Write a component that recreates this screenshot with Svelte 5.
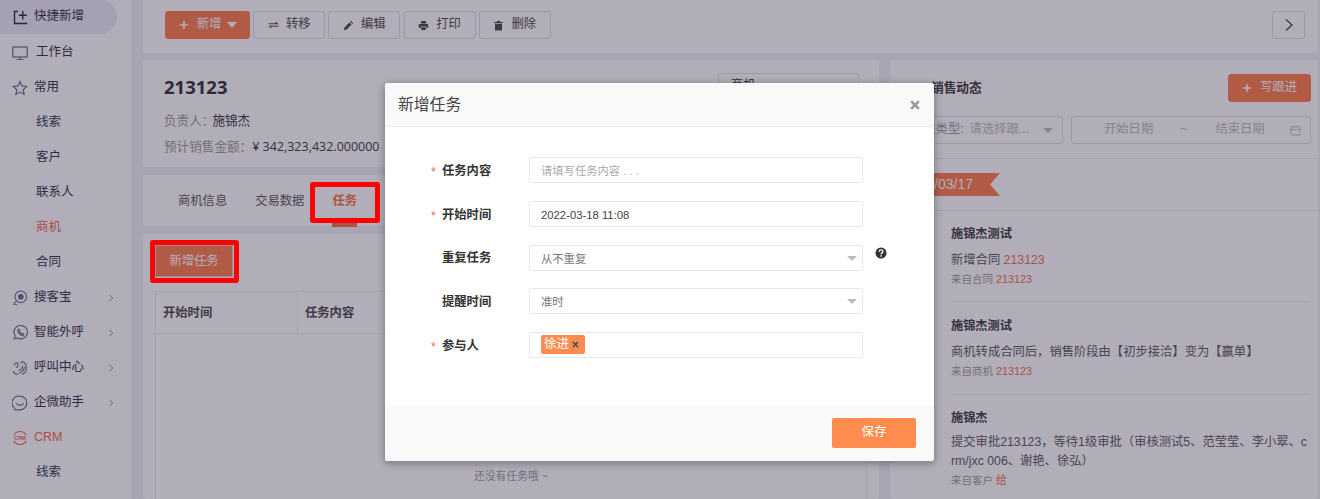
<script>
  const sub = ['线索', '客户', '联系人', '商机', '合同'];
  const tools = [
    { label: '转移', icon: 'swap' },
    { label: '编辑', icon: 'pen' },
    { label: '打印', icon: 'print' },
    { label: '删除', icon: 'trash' }
  ];
  const groups = [
    { label: '搜客宝', icon: 'search' },
    { label: '智能外呼', icon: 'phone' },
    { label: '呼叫中心', icon: 'call' },
    { label: '企微助手', icon: 'wechat' }
  ];
  const feed = [
    { name: '施锦杰测试', text: '新增合同 ', link: '213123', from: '来自合同 ', ref: '213123' },
    { name: '施锦杰测试', text: '商机转成合同后，销售阶段由【初步接洽】变为【赢单】', link: '', from: '来自商机 ', ref: '213123' },
    { name: '施锦杰', text: '提交审批213123，等待1级审批（审核测试5、范莹莹、李小翠、crm/jxc 006、谢艳、徐弘）', link: '', from: '来自客户 ', ref: '给' }
  ];
</script>

{#snippet chevron()}
  <svg class="chev" viewBox="0 0 6 8" width="6" height="8"><path d="M1.500 .8L4.700 4 1.500 7.200" fill="none" stroke="#8f8f9c" stroke-width="1"/></svg>
{/snippet}

{#snippet navIcon(name)}
  <svg class="nav-ico" viewBox="0 0 16 16" width="16" height="16" fill="none" stroke="#666a8a" stroke-width="1.200">
    {#if name === 'search'}
      <circle cx="8.800" cy="6.800" r="5.800"/><circle cx="8.800" cy="6.800" r="2.800" fill="#5c6080" stroke="none"/><path d="M3.800 11.500L1.200 15M3 14.500l2 .3"/>
    {:else if name === 'phone'}
      <path d="M2.200 13.800l.9-3.100A6.700 6.700 0 1 1 5.600 13z"/><path d="M5.800 5c.1 2.800 2.400 5.300 5.300 5.600l.6-1.500-1.900-1-1 .7-1.700-1.800.7-1-1-1.900z"/>
    {:else if name === 'call'}
      <path d="M2 5.500C2.500 3 5 2 6 3.500S5 7 4.500 8M6.500 14c-3 .5-5-1-5-3M10 14.500c3.500-1.500 5-5 4-9S10 1 8.500 3M6.500 10.500C9 10.500 11 8 10.500 5.500M7 13c3-.5 5-3 5.500-6"/>
    {:else if name === 'wechat'}
      <path d="M8 1.200a6.800 6.800 0 0 1 0 13.600H3.200L1.800 12.500A6.800 6.800 0 0 1 8 1.200z"/><path d="M4.300 8.300c1.500 2.800 5.900 2.800 7.400 0"/>
    {/if}
  </svg>
{/snippet}

<div class="app">
  <aside class="side">
    <div class="nav-row active">
      <svg class="nav-ico" viewBox="0 0 16 16" width="16" height="16" fill="none" stroke="#22223f" stroke-width="1.400"><path d="M6 2.500H2.500v12h12v-1M10.800 2v8.500M6.800 6.300h8"/></svg>
      <span>快捷新增</span>
    </div>
    <div class="nav-row wide">
      <svg class="nav-ico" viewBox="0 0 16 16" width="16" height="16" fill="none" stroke="#666a8a" stroke-width="1.200"><rect x=".8" y="2" width="14.400" height="10"/><path d="M8 12v2.500M4.500 14.500h7"/></svg>
      <span>工作台</span>
    </div>
    <div class="nav-row">
      <svg class="nav-ico" viewBox="0 0 16 16" width="16" height="16" fill="none" stroke="#666a8a" stroke-width="1.200"><path d="M8 1.500l2 4.400 4.700.6-3.500 3.200.9 4.700L8 12.100l-4.100 2.300.9-4.700L1.300 6.500 6 5.900z"/></svg>
      <span>常用</span>
    </div>
    {#each sub as s}
      <div class="nav-row child" class:current={s === '商机'}>{s}</div>
    {/each}
    {#each groups as g}
      <div class="nav-row">
        {@render navIcon(g.icon)}
        <span>{g.label}</span>
        {@render chevron()}
      </div>
    {/each}
    <div class="nav-row current">
      <svg class="nav-ico" viewBox="0 0 16 16" width="16" height="16" fill="none" stroke="#f0673f" stroke-width="1.100"><path d="M1.800 5.300a7 7 0 0 1 12.400 0M1.800 10.700a7 7 0 0 0 12.400 0"/><text x="8" y="10" text-anchor="middle" class="crm-mark">CRM</text></svg>
      <span>CRM</span>
    </div>
    <div class="nav-row child">线索</div>
  </aside>

  <main class="main">
    <section class="toolbar">
      <button class="btn primary">
        <svg viewBox="0 0 10 10" width="10" height="10"><path d="M5 1v8M1 5h8" stroke="#fff" stroke-width="1.600"/></svg>
        <span class="pad">新增</span>
        <i class="caret white"></i>
      </button>
      {#each tools as t}
        <button class="btn tool">
          <svg viewBox="0 0 11 11" width="11" height="11" fill="#404040">
            {#if t.icon === 'swap'}
              <path d="M.5 3.200H7.800V1.500L10.500 4.200H.5zM10.500 6.800H3.200V8.500L.5 5.800h10z"/>
            {:else if t.icon === 'pen'}
              <path d="M.8 10.200l.7-2.800 5-5 2.100 2.100-5 5zM7.200 1.700l.9-.9 2.100 2.100-.9.9z"/>
            {:else if t.icon === 'print'}
              <path d="M3 1h5v2.500H3zM.8 4h9.400v4H8.500V6.500h-6V8H.8zM3.200 7.200h4.600V10H3.200z"/>
            {:else}
              <path d="M4 .8h3V2h3v1H1V2h3zM2 3.800h7V10.500H2z"/>
            {/if}
          </svg>
          <span>{t.label}</span>
        </button>
      {/each}
      <button class="btn next">
        <svg viewBox="0 0 10 14" width="10" height="14"><path d="M2 1.500L8 7l-6 5.500" fill="none" stroke="#404040" stroke-width="1.300"/></svg>
      </button>
    </section>

    <div class="columns">
      <div class="left">
        <section class="summary">
          <h1>213123</h1>
          <p class="line owner"><span class="dim">负责人：</span>施锦杰</p>
          <p class="line"><span class="dim">预计销售金额：</span><span class="amount">¥ 342,323,432.000000</span></p>
          <div class="stage">商机</div>
        </section>
        <nav class="tabs">
          <span class="tab">商机信息</span>
          <span class="tab">交易数据</span>
          <span class="tab on">任务</span>
        </nav>
        <section class="tasks">
          <button class="btn primary big">新增任务</button>
          <div class="table">
            <div class="thead">
              <div class="th first">开始时间</div>
              <div class="th">任务内容</div>
            </div>
            <div class="empty">还没有任务哦 ~</div>
          </div>
        </section>
      </div>

      <section class="right">
        <div class="r-head">
          <h2>销售动态</h2>
          <button class="btn primary follow">
            <svg viewBox="0 0 10 10" width="10" height="10"><path d="M5 1v8M1 5h8" stroke="#fff" stroke-width="1.600"/></svg>
            <span class="pad">写跟进</span>
          </button>
        </div>
        <div class="filters">
          <div class="select-f"><span class="dim">跟进类型:</span><span class="ph">请选择跟...</span><i class="caret grey"></i></div>
          <div class="dates">
            <span class="ph">开始日期</span><span class="ph tilde">~</span><span class="ph">结束日期</span>
            <svg viewBox="0 0 12 12" width="11" height="11" fill="none" stroke="#bbb" stroke-width="1"><rect x="1" y="2" width="10" height="9" rx="1"/><path d="M1 5h10M4 .5v2M8 .5v2"/></svg>
          </div>
        </div>
        <div class="date-row"><span class="ribbon">2022/03/17</span></div>
        <ul class="feed">
          {#each feed as f}
            <li>
              <div class="who">{f.name}</div>
              <div class="what">{f.text}{#if f.link}<span class="lnk">{f.link}</span>{/if}</div>
              <div class="whence">{f.from}<span class="lnk">{f.ref}</span></div>
            </li>
          {/each}
        </ul>
      </section>
    </div>
  </main>

  <div class="scrim"></div>

  <div class="modal">
    <header class="m-head">
      <span>新增任务</span>
      <svg viewBox="0 0 10 10" width="10" height="10"><path d="M1.200 1.200l7.600 7.600M8.800 1.200l-7.600 7.600" stroke="#999" stroke-width="2.600"/></svg>
    </header>
    <div class="m-body">
      <div class="field">
        <label class="req">任务内容</label>
        <div class="input ph2">请填写任务内容 . . .</div>
      </div>
      <div class="field">
        <label class="req">开始时间</label>
        <div class="input val">2022-03-18 11:08</div>
      </div>
      <div class="field">
        <label>重复任务</label>
        <div class="input sel">从不重复<i class="caret grey"></i></div>
        <svg class="help" viewBox="0 0 12 12" width="12" height="12"><circle cx="6" cy="6" r="5.500" fill="#333"/><path d="M4.200 4.700c0-2.300 3.700-2.300 3.700-.1 0 1.300-1.900 1.300-1.900 2.700" fill="none" stroke="#fff" stroke-width="1.300"/><rect x="5.300" y="8.200" width="1.400" height="1.400" fill="#fff"/></svg>
      </div>
      <div class="field">
        <label>提醒时间</label>
        <div class="input sel">准时<i class="caret grey"></i></div>
      </div>
      <div class="field">
        <label class="req">参与人</label>
        <div class="input tags">
          <span class="tag">徐进<svg viewBox="0 0 8 8" width="7" height="7"><path d="M1 1l6 6M7 1L1 7" stroke="#555" stroke-width="2"/></svg></span>
        </div>
      </div>
    </div>
    <footer class="m-foot"><button class="save">保存</button></footer>
  </div>

  <div class="mark mark-tab"></div>
  <div class="mark mark-btn"></div>
</div>

<style>
  :global(body) { margin: 0; }
  * { box-sizing: border-box; }
  .app {
    position: relative; display: flex; height: 499px; overflow: hidden;
    background: #f0f2f5; color: #333; font: 12.300px/1.4 "Liberation Sans", "Noto Sans CJK SC", sans-serif;
  }
  .side { width: 131px; flex: none; background: #fff; }
  .nav-row {
    display: flex; align-items: center; height: 35px; padding-left: 12px; gap: 6px;
    font-size: 12.500px; color: #2b2b3a; width: 117px;
  }
  .nav-row.wide { gap: 8px; }
  .nav-row.active { height: 34px; margin-bottom: 1px; background: #eceaf6; border-radius: 0 17px 17px 0; }
  .nav-row.child { padding-left: 36px; }
  .nav-row.current { color: #f0673f; }
  .nav-row span { white-space: nowrap; }
  .nav-ico { flex: none; }
  .crm-mark { font: bold 5px "Liberation Sans", sans-serif; fill: #f0673f; stroke: none; }
  .chev { margin-left: auto; margin-right: 3px; flex: none; }

  .main { flex: 1; min-width: 0; padding: 0 2px 0 12px; display: flex; flex-direction: column; gap: 7px; }
  .toolbar {
    flex: none; height: 53px; background: #fff; border-radius: 0 0 3px 3px;
    display: flex; align-items: flex-start; padding: 11px 13px 0 22px; gap: 3.200px;
  }
  .btn {
    height: 28px; padding: 0 14px; display: inline-flex; align-items: center; justify-content: center; gap: 7px;
    background: #fff; border: 1px solid #dcdfe6; border-radius: 3px; color: #444; font: inherit;
  }
  .btn.tool { width: 72px; padding: 0; }
  .btn.primary { background: #ff7a45; border-color: #ff7a45; color: #fff; }
  .btn.primary .pad { margin-left: 2px; }
  .toolbar .primary { width: 85px; padding: 0 0 0 1px; gap: 6px; }
  .next { margin-left: auto; width: 33px; padding: 0; }
  .caret { display: inline-block; width: 0; height: 0; border: 5px solid transparent; border-bottom-width: 0; }
  .caret.white { border-top: 6px solid #fff; border-left-width: 5px; }
  .caret.grey { border-top: 5px solid #bbb; }

  .columns { flex: 1; min-height: 0; display: flex; gap: 11px; }
  .left { width: 736px; flex: none; display: flex; flex-direction: column; gap: 8px; }
  .summary { position: relative; height: 107px; flex: none; background: #fff; border-radius: 3px; padding: 14px 21px; }
  .summary h1 { margin: 0 0 9px; font: bold 18.500px/26px "Open Sans", sans-serif; color: #2a2a2a; }
  .line { margin: 0; font-size: 12.600px; line-height: 25px; white-space: nowrap; }
  .owner .dim { margin-right: -2px; }
  .amount { font-family: "Open Sans", "Noto Sans CJK SC", sans-serif; font-size: 12.500px; }
  .dim { color: #999; }
  .stage { position: absolute; left: 575px; top: 13px; width: 141px; height: 28px; border: 1px solid #dcdfe6; border-radius: 3px; padding: 3px 12px; }
  .tabs { height: 51px; flex: none; background: #fff; border-radius: 3px; display: flex; padding: 2px 0 0 35px; gap: 28px; align-items: center; color: #555; position: relative; }
  .tab.on { color: #ff6a35; font-weight: 700; position: relative; align-self: stretch; display: flex; align-items: center; }
  .tab.on::after { content: ""; position: absolute; left: 0; right: 0; bottom: -1px; height: 4px; background: #ff6a35; }
  .tasks { flex: 1; min-height: 0; background: #fff; border-radius: 3px; padding: 11px 12px 0; }
  .btn.big { width: 78px; height: 32px; padding: 2px 0 0; border-radius: 0; border-color: #ccc; }
  .table { margin-top: 14px; border: 1px solid #eee; border-bottom: 0; height: 300px; }
  .thead { display: flex; height: 42px; border-bottom: 1px solid #eee; font-weight: 700; color: #444; }
  .th { padding-left: 7px; line-height: 42px; flex: 1; }
  .th.first { flex: none; width: 142px; border-right: 1px solid #eee; }
  .empty { padding-top: 135px; text-align: center; font-size: 10.800px; color: #999; }

  .right { flex: 1; min-width: 0; background: #fff; border-radius: 3px; display: flex; flex-direction: column; }
  .r-head { display: flex; justify-content: space-between; align-items: flex-start; padding: 14px 7px 0 41px; height: 56px; flex: none; }
  .r-head h2 { margin: 4px 0 0; font-size: 12.700px; font-weight: 700; color: #333; line-height: 20px; }
  .btn.follow { width: 83px; padding: 0; gap: 6px; }
  .filters { display: flex; gap: 8px; padding: 0 7px 0 15px; height: 43px; border-bottom: 1px solid #eee; flex: none; }
  .select-f, .dates { height: 28px; border: 1px solid #dcdfe6; border-radius: 3px; display: flex; align-items: center; }
  .select-f { width: 158px; flex: none; padding: 0 9px 0 5px; white-space: nowrap; gap: 6px; }
  .select-f .caret { margin-left: auto; }
  .ph { color: #bbb; }
  .dates { flex: 1; padding: 0 9px 0 32px; }
  .dates .tilde { margin: 0 28px 0 27px; }
  .dates svg { margin-left: auto; }
  .date-row { height: 52px; border-bottom: 1px solid #eee; padding-top: 14px; flex: none; }
  .ribbon {
    display: inline-block; width: 110px; height: 23px; line-height: 23px; padding-left: 13px; background: #ff7a45; color: #fff; font-size: 14px;
    clip-path: polygon(0 0, 100% 0, 91% 50%, 100% 100%, 0 100%);
  }
  .feed { list-style: none; margin: 0; padding: 0 10px 0 61px; }
  .feed li { padding: 14px 0 0; border-bottom: 1px solid #eee; height: 93px; }
  .feed li:first-child { height: 91px; padding-top: 13px; }
  .feed li:last-child { height: auto; border: 0; padding-top: 13px; }
  .who { font-weight: 700; font-size: 12.200px; line-height: 20px; color: #333; }
  .what { margin-top: 7px; line-height: 18.500px; color: #555; word-break: break-all; }
  .whence { margin-top: 1px; font-size: 10.500px; line-height: 16px; color: #999; }
  .feed li:last-child .what { margin-top: 5px; }
  .feed li:last-child .whence { margin-top: 2px; }
  .lnk { color: #f26b43; }
  .whence .lnk { font-size: 10.800px; }

  .scrim { position: absolute; inset: 0; background: rgba(55, 45, 75, 0.39); }

  .modal {
    position: absolute; left: 385px; top: 83px; width: 549px; height: 378px; background: #fff;
    border-radius: 3px; box-shadow: 0 2px 8px rgba(0, 0, 0, .35); display: flex; flex-direction: column; overflow: hidden;
  }
  .m-head {
    height: 44px; flex: none; display: flex; align-items: center; justify-content: space-between; padding: 1px 14px 0 13px;
    background: #f9f9f9; border-bottom: 1px solid #eee; font-size: 15.800px; color: #444;
  }
  .m-body { flex: 1; padding-top: 30.100px; display: flex; flex-direction: column; gap: 17.750px; }
  .field { display: flex; align-items: center; height: 26px; position: relative; }
  .field label { width: 144px; padding: 3px 0 0 57px; font-weight: 700; color: #333; position: relative; flex: none; }
  .req::before { content: "*"; position: absolute; left: 46px; top: 4px; color: #f26b43; font-weight: 400; }
  .input {
    width: 334px; height: 26px; border: 1px solid #e6e8ee; border-radius: 2px; padding: 1px 11px 0; line-height: 24px; font-size: 11.300px; color: #555; position: relative;
  }
  .val { color: #444; }
  .ph2 { color: #aaa; }
  .sel { color: #777; }
  .sel .caret { position: absolute; right: 5px; top: 10px; }
  .help { margin-left: 12px; margin-top: -10px; }
  .tag {
    position: absolute; left: 11px; top: 2px; width: 44px; height: 19px; background: #ff8c4f; border-radius: 2px; color: #fff;
    display: flex; align-items: center; gap: 3px; padding-left: 3px; font-size: 12.500px; line-height: 19px;
  }
  .m-foot { height: 56px; flex: none; background: #f9f9f9; display: flex; justify-content: flex-end; padding: 13px 18px 0 0; }
  .save { width: 84px; height: 30px; background: #ff8c4f; border: 0; border-radius: 2px; color: #fff; font: inherit; font-size: 12.500px; }

  .mark { position: absolute; border: 5px solid #f00; border-radius: 3px; }
  .mark-tab { left: 310px; top: 182px; width: 70px; height: 41px; }
  .mark-btn { left: 150px; top: 240px; width: 89px; height: 43px; }
</style>
